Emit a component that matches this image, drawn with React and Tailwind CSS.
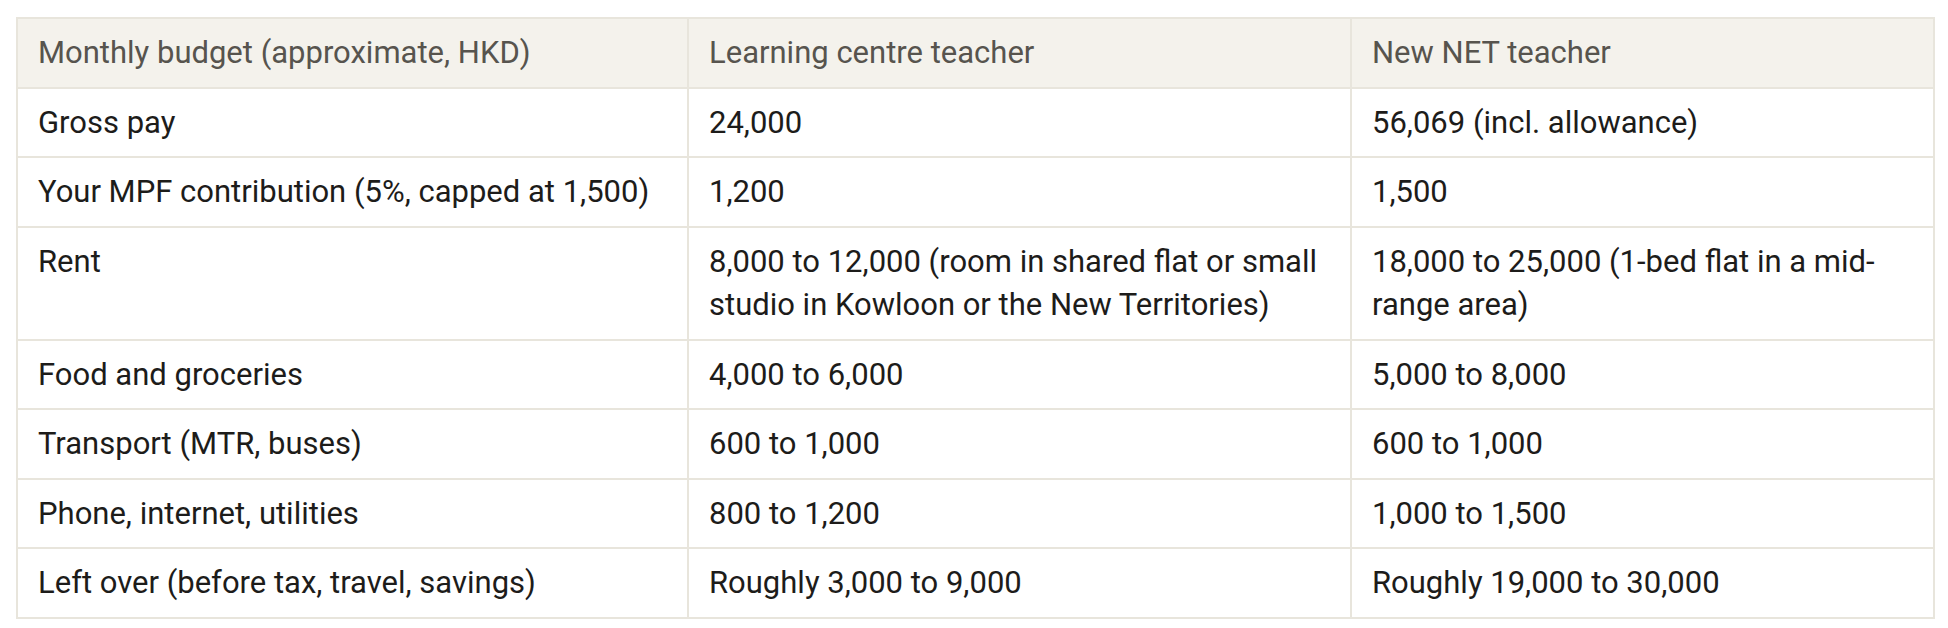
import React from 'react';

const rows = [
  ['Gross pay', '24,000', '56,069 (incl. allowance)'],
  ['Your MPF contribution (5%, capped at 1,500)', '1,200', '1,500'],
  [
    'Rent',
    <>
      <span className="whitespace-nowrap">8,000 to 12,000 (room in shared flat or small</span>
      <br />
      studio in Kowloon or the New Territories)
    </>,
    <>
      <span className="whitespace-nowrap">18,000 to 25,000 (1-bed flat in a mid-</span>
      <br />
      range area)
    </>,
  ],
  ['Food and groceries', '4,000 to 6,000', '5,000 to 8,000'],
  ['Transport (MTR, buses)', '600 to 1,000', '600 to 1,000'],
  ['Phone, internet, utilities', '800 to 1,200', '1,000 to 1,500'],
  ['Left over (before tax, travel, savings)', 'Roughly 3,000 to 9,000', 'Roughly 19,000 to 30,000'],
];

const headers = ['Monthly budget (approximate, HKD)', 'Learning centre teacher', 'New NET teacher'];

const App = () => {
  return (
    <div className="min-h-screen bg-white pl-[16px] pt-[17px]" style={{ fontFamily: 'Roboto, sans-serif' }}>
      <table className="w-[1917px] table-fixed border-collapse text-[31px] leading-[43.5px]">
        <colgroup>
          <col className="w-[671px]" />
          <col className="w-[663px]" />
          <col className="w-[583px]" />
        </colgroup>
        <thead>
          <tr className="bg-[#f4f2ec]">
            {headers.map((h) => (
              <th key={h} className="border-2 border-[#e8e5dc] px-[20px] py-[12px] text-left font-normal text-[#57544e]">
                {h}
              </th>
            ))}
          </tr>
        </thead>
        <tbody>
          {rows.map((row, i) => (
            <tr key={i}>
              {row.map((cell, j) => (
                <td key={j} className="border-2 border-[#e8e5dc] px-[20px] py-[12px] align-top text-[#1d1c1a]">
                  {cell}
                </td>
              ))}
            </tr>
          ))}
        </tbody>
      </table>
    </div>
  );
};

export default App;
